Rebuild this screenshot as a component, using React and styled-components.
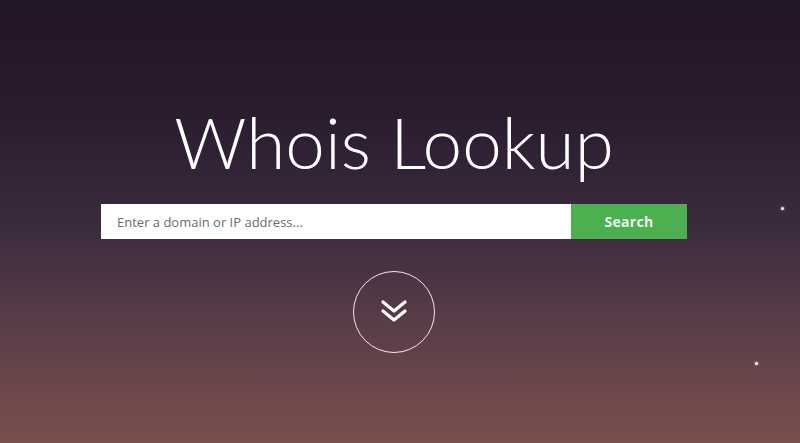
import React from 'react';
import styled, { createGlobalStyle } from 'styled-components';

const Global = createGlobalStyle`
  html, body { margin: 0; padding: 0; }
  body {
    font-family: 'Lato', 'Open Sans', sans-serif;
    background: #241627;
  }
`;

const Hero = styled.div`
  position: relative;
  height: 443px;
  overflow: hidden;
  background: linear-gradient(180deg, #221526 0%, #2b1b2f 25%, #3a2a3e 50%, #583c47 72%, #7a4f4e 100%);
  display: flex;
  flex-direction: column;
  align-items: center;
  padding: 99px 12px 0 0;
  box-sizing: border-box;
`;

const Title = styled.h1`
  margin: 0;
  color: #fff;
  font-family: 'Lato', sans-serif;
  font-weight: 300;
  font-size: 71px;
  line-height: 85px;
`;

const SearchForm = styled.form`
  display: flex;
  width: 586px;
  height: 35px;
  margin-top: 20px;
`;

const Field = styled.input`
  flex: 1;
  border: none;
  outline: none;
  background: #fff;
  padding: 0 16px;
  font-family: 'Open Sans', sans-serif;
  font-size: 13px;
  color: #333;
  &::placeholder { color: #6b6b6b; }
`;

const SearchButton = styled.button`
  width: 116px;
  border: none;
  background: #4cb050;
  color: #eef7ee;
  font-family: 'Open Sans', sans-serif;
  font-weight: 700;
  font-size: 14px;
  letter-spacing: 0.3px;
  cursor: pointer;
`;

const ScrollDown = styled.a`
  margin-top: 32px;
  width: 80px;
  height: 80px;
  border: 1.5px solid rgba(255,255,255,0.9);
  border-radius: 50%;
  display: flex;
  align-items: center;
  justify-content: center;
  color: #fff;
`;

const Star = styled.span`
  position: absolute;
  left: ${p => p.x}px;
  top: ${p => p.y}px;
  width: 3px;
  height: 3px;
  border-radius: 50%;
  background: #fff;
  box-shadow: 0 0 3px rgba(255,255,255,0.7);
`;

export default function App() {
  return (
    <>
      <Global />
      <Hero>
        <Title>Whois Lookup</Title>
        <SearchForm onSubmit={e => e.preventDefault()}>
          <Field placeholder="Enter a domain or IP address..." />
          <SearchButton type="submit">Search</SearchButton>
        </SearchForm>
        <ScrollDown href="#">
          <svg width="30" height="28" viewBox="0 0 30 28" fill="none" stroke="#fff" strokeWidth="3.2" strokeLinecap="round" strokeLinejoin="round">
            <polyline points="4,4 15,13 26,4" />
            <polyline points="4,13 15,22 26,13" />
          </svg>
        </ScrollDown>
        <Star x={781} y={207} />
        <Star x={755} y={362} />
      </Hero>
    </>
  );
}
